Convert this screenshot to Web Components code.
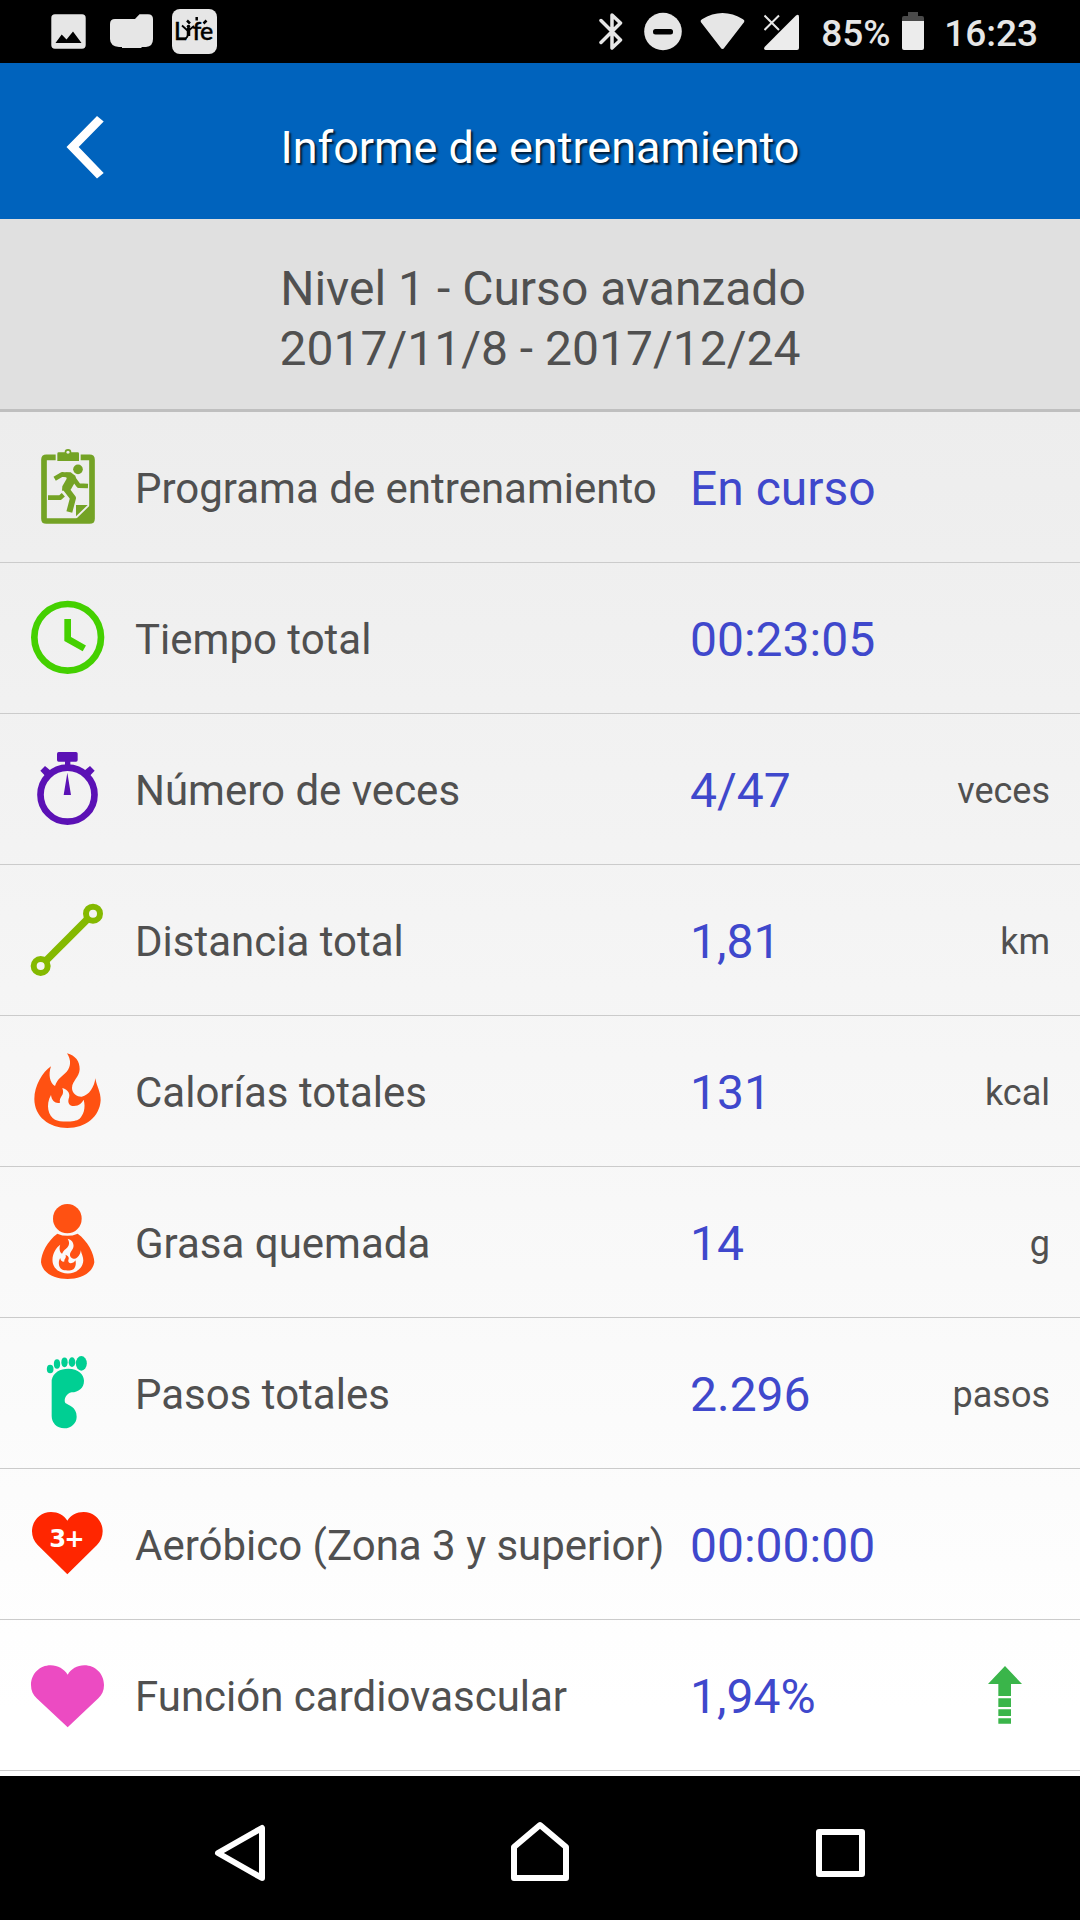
<!DOCTYPE html>
<html lang="es">
<head>
<meta charset="utf-8">
<title>Informe de entrenamiento</title>
<style>
  body {
    margin: 0;
    background: #000;
    font-family: Roboto, "Noto Sans", sans-serif;
  }
</style>
</head>
<body>

<report-screen>
  <status-bar slot="status" battery="85%" time="16:23"></status-bar>
  <title-bar slot="title">Informe de entrenamiento</title-bar>
  <program-summary slot="summary">
    <span>Nivel 1 - Curso avanzado</span>
    <span slot="dates">2017/11/8 - 2017/12/24</span>
  </program-summary>

  <stat-row icon="program" value="En curso">Programa de entrenamiento</stat-row>
  <stat-row icon="clock" value="00:23:05">Tiempo total</stat-row>
  <stat-row icon="stopwatch" value="4/47" unit="veces">Número de veces</stat-row>
  <stat-row icon="distance" value="1,81" unit="km">Distancia total</stat-row>
  <stat-row icon="flame" value="131" unit="kcal">Calorías totales</stat-row>
  <stat-row icon="fat" value="14" unit="g">Grasa quemada</stat-row>
  <stat-row icon="foot" value="2.296" unit="pasos">Pasos totales</stat-row>
  <stat-row icon="zone" value="00:00:00">Aeróbico (Zona 3 y superior)</stat-row>
  <stat-row icon="heart" value="1,94%" trend="up">Función cardiovascular</stat-row>

  <nav-bar slot="nav"></nav-bar>
</report-screen>

<script>
const FLAME = `
  M201 100 C226 106 240 125 239 148 C238 172 217 182 216 204 C216 222 234 231 245 230
  C268 226 283 200 286 175 C290 200 302 215 302 241 C299 290 258 324 202 324
  C148 324 103 290 103 237 C103 197 128 156 153 139 C144 165 150 190 165 198
  C172 175 188 168 200 155 C213 140 214 120 201 100Z
  M187 204 C205 210 212 222 206 236 C202 250 210 259 222 258 C238 257 246 248 251 239
  C258 265 250 285 238 297 C225 307 180 307 165 299 C145 288 136 255 153 225
  C155 243 168 252 180 248 C176 228 196 228 187 204Z`;

// each entry: top of the 240-unit viewBox, then the drawing itself
const ICONS = {
  program: [81, `
    <g fill="none" stroke="#74a325">
      <path stroke-width="17" d="M167 112H139Q132 112 132 119V296Q132 303 139 303H269Q276 303 276 296V119Q276 112 269 112H242"/>
      <circle cx="204" cy="97" r="7.5" stroke-width="5"/>
      <path stroke-width="14" stroke-linejoin="round" d="M164 176L187 163L210 166M219 174L236 197L264 198"/>
      <path stroke-width="18" stroke-linejoin="round" d="M197 205L219 234L208 276"/>
      <path stroke-width="14" stroke-linejoin="round" d="M144 233H180L190 224"/>
    </g>
    <g fill="#74a325">
      <path d="M176 97H195A10 8 0 0 0 213 97H233Q237 97 237 101V123H172V101Q172 97 176 97Z"/>
      <circle cx="234" cy="148" r="14.500"/>
      <path d="M196 157L212 157L226 167L229 180L212 209L186 212L187 199L200 176Z"/>
      <path d="M228 255H263L228 289ZM270 256H276V303H228V297Z"/>
    </g>`],
  clock: [534, `
    <g fill="none" stroke="#44d000" stroke-width="20">
      <circle cx="203" cy="652" r="100"/>
      <path d="M203 597V657L253 685"/>
    </g>`],
  stopwatch: [87, `
    <g fill="#5b11b5">
      <rect x="171" y="96" width="62" height="29" rx="5"/>
      <path d="M195 122H211V140H195ZM121 152L135 138L154 154L138 170ZM284 152L270 138L251 154L267 170ZM202 158L213 225H191Z"/>
    </g>
    <circle cx="202.500" cy="224" r="81" fill="none" stroke="#5b11b5" stroke-width="20"/>`],
  distance: [540, `
    <g fill="none" stroke="#84b900" stroke-width="18">
      <path stroke-width="22" d="M137 723L264 596"/>
      <circle cx="122" cy="738" r="21"/>
      <circle cx="279" cy="581" r="21"/>
    </g>`],
  flame: [93, `<path fill="#ff5112" fill-rule="evenodd" d="${FLAME}"/>`],
  fat: [546, `
    <g fill="#ff5112">
      <ellipse cx="202" cy="596" rx="43" ry="44"/>
      <path d="M172 641Q202 654 233 641C262 662 283 700 283 727C278 760 240 777 203 777C165 777 127 760 123 727C123 700 143 662 172 641Z"/>
    </g>
    <path fill="#f9f9f9" fill-rule="evenodd" transform="translate(109.500 609.500) scale(.465)" d="${FLAME}"/>`],
  foot: [99, `
    <g fill="#00cf93">
      <ellipse cx="150.500" cy="147" rx="10" ry="13"/>
      <ellipse cx="171" cy="132" rx="9.500" ry="14.500"/>
      <ellipse cx="193.500" cy="127" rx="9.500" ry="14.500"/>
      <ellipse cx="216" cy="126.500" rx="10" ry="14.500"/>
      <ellipse cx="244" cy="130" rx="16.500" ry="22"/>
      <path d="M155 180C160 157 180 146 205 146C235 146 252 164 252 182C252 205 235 216 215 217C200 219 190 238 196 249C205 256 230 260 230 290C230 310 213 325 193 325C170 325 155 308 155 288Z"/>
    </g>`],
  zone: [552, `
    <path fill="#ff2600" d="M202 763L113 675C102 664 96 650 96 634C96 602 121 576 153 576C174 576 192 586 202 602C212 586 230 576 251 576C283 576 308 602 308 634C308 650 302 664 291 675Z"/>
    <text x="148" y="682" fill="#fff" font-family="DejaVu Sans" font-weight="700" font-size="73" textLength="106">3+</text>`],
  heart: [1005, `
    <path fill="#ec4bc2" d="M203 1222L110 1135C99 1124 93 1112 93 1095C93 1062 119 1036 152 1036C174 1036 192 1047 203 1064C213 1047 231 1036 253 1036C286 1036 312 1062 312 1095C312 1112 306 1124 295 1135Z"/>`],
};

const TREND_UP = `
  <svg class="trend" width="88" height="88" viewBox="963 513 264 264">
    <path fill="#3ab54a" d="M1095 558L1146 612H1113V648H1075V612H1044ZM1075 655H1113V681H1075ZM1075 688H1113V708H1075ZM1075 715H1113V731H1075Z"/>
  </svg>`;

class ReportScreen extends HTMLElement {
  constructor() {
    super();
    this.attachShadow({ mode: 'open' }).innerHTML = `
      <style>
        :host {
          display: flex;
          flex-direction: column;
          width: 1080px;
          height: 1920px;
          overflow: hidden;
        }

        .list {
          flex: 1;
          min-height: 0;
          background: linear-gradient(#ededed, #fff 95%);
        }
      </style>
      <slot name="status"></slot>
      <slot name="title"></slot>
      <slot name="summary"></slot>
      <div class="list"><slot></slot></div>
      <slot name="nav"></slot>
    `;
  }
}

class StatusBar extends HTMLElement {
  constructor() {
    super();
    this.attachShadow({ mode: 'open' });
  }

  connectedCallback() {
    this.shadowRoot.innerHTML = `
      <style>
        :host {
          display: flex;
          justify-content: space-between;
          box-sizing: border-box;
          height: 63px;
          padding: 0 42px 0 51px;
          background: #000;
          color: #e6e6e6;
          font-size: 37px;
          font-weight: 500;
          line-height: 67px;
        }

        .side { display: flex; }
        svg { display: block; fill: #e6e6e6; }
        .folder { margin-left: 24px; }
        .app { margin-left: 19px; }
        .dnd { margin-left: 21px; }
        .wifi { margin-left: 18px; }
        .signal { margin-left: 19px; }
        .battery-text { width: 81px; margin-left: 22px; }
        .battery { margin-right: 20px; }
      </style>
      <div class="side">
        <svg width="35" height="63" viewBox="0 0 35 63">
          <path fill-rule="evenodd" d="M4 14.300H31Q34.700 14.300 34.700 18V45Q34.700 48.700 31 48.700H4Q.3 48.700 .3 45V18Q.3 14.300 4 14.300ZM4.500 43H30.500L22 31.500L15.500 39.500L10.700 34.500Z"/>
        </svg>
        <svg class="folder" width="43" height="63" viewBox="0 0 43 63">
          <path d="M5 19H25L29.500 14.300H38Q43 14.300 43 19V39Q43 46.500 36 47H31.500V48H12V47H9Q0 46 0 39V24Q0 19 5 19Z"/>
        </svg>
        <svg class="app" width="45" height="63" viewBox="0 0 45 63">
          <rect y="9" width="45" height="45" rx="8"/>
          <g fill="#000" stroke="#000" stroke-width=".4" font-family="Lato, sans-serif">
            <text x="2" y="40" font-size="24">L</text>
            <text x="20.500" y="40" font-size="25">f</text>
            <text x="28" y="40" font-size="25">e</text>
          </g>
          <g fill="none" stroke="#000" stroke-width="1.800">
            <path d="M10 25.500L16 31L22 26M13 39.500Q16 37 16.500 33"/>
            <path stroke-width="2.500" d="M24.700 17V20.500M15 20.500L18 23.500M34.500 20.500L31.500 23.500"/>
            <path stroke-width="3.500" d="M16.500 28V36"/>
          </g>
          <circle cx="16.500" cy="26.500" r="1.800" fill="#000"/>
        </svg>
      </div>
      <div class="side">
        <svg width="24" height="63" viewBox="0 0 24 63">
          <path fill="none" stroke="#e6e6e6" stroke-width="3.500" stroke-linejoin="round" stroke-linecap="round" d="M2 20.500L21.500 40L13 48V15L21.500 23L2 42.500"/>
        </svg>
        <svg class="dnd" width="38" height="63" viewBox="0 0 38 63">
          <circle cx="19" cy="31.500" r="18.800"/>
          <rect x="9" y="29" width="20" height="5.500" rx="2.500" fill="#000"/>
        </svg>
        <svg class="wifi" width="45" height="63" viewBox="0 0 45 63">
          <path d="M.8 22Q0 20.500 2 19.300Q22.500 6.500 43 19.300Q45 20.500 44.200 22L24.500 47.500Q22.500 50.500 20.500 47.500Z"/>
        </svg>
        <svg class="signal" width="35" height="63" viewBox="0 0 35 63">
          <path fill="#ececec" d="M32 15.500Q35 13.500 35 17V48Q35 50 33 50H1.500Q-1 49 .8 46.700Z"/>
          <path fill="none" stroke="#000" stroke-width="7" d="M0 15L15 30M15 15L0 30"/>
          <path fill="none" stroke="#e6e6e6" stroke-width="2" d="M.5 15.500L15 30M15 15.500L.5 30"/>
        </svg>
        <span class="battery-text">${this.getAttribute('battery')}</span>
        <svg class="battery" width="22" height="63" viewBox="0 0 22 63">
          <path fill="#4a4a4a" d="M6 12H16V16H20Q22 16 22 18V21H0V18Q0 16 2 16H6Z"/>
          <path fill="#ececec" d="M0 21H22V48Q22 50 20 50H2Q0 50 0 48Z"/>
        </svg>
        <span>${this.getAttribute('time')}</span>
      </div>
    `;
  }
}

class TitleBar extends HTMLElement {
  constructor() {
    super();
    this.attachShadow({ mode: 'open' }).innerHTML = `
      <style>
        :host {
          display: grid;
          grid-template-columns: 170px 1fr 170px;
          align-items: center;
          height: 156px;
          background: #0063bd;
          color: #fff;
          font-size: 45px;
        }

        .text {
          padding-top: 13px;
          text-align: center;
          text-shadow: 2px 2px 2px rgba(0, 0, 0, 0.75);
          white-space: nowrap;
        }
      </style>
      <svg width="170" height="156" viewBox="0 63 170 156">
        <path fill="#fff" d="M66.500 147L97 116L103.700 121.500L78.700 147L103.700 173L97 178.500Z"/>
      </svg>
      <div class="text"><slot></slot></div>
    `;
  }
}

class ProgramSummary extends HTMLElement {
  constructor() {
    super();
    this.attachShadow({ mode: 'open' }).innerHTML = `
      <style>
        :host {
          display: flex;
          flex-direction: column;
          align-items: center;
          justify-content: center;
          box-sizing: border-box;
          height: 193px;
          padding-top: 10px;
          border-bottom: 3px solid #bfbfbf;
          background: #e0e0e0;
          color: #505050;
          font-size: 48px;
          line-height: 60px;
        }

        .name { padding-left: 6px; }
      </style>
      <div class="name"><slot></slot></div>
      <div><slot name="dates"></slot></div>
    `;
  }
}

class StatRow extends HTMLElement {
  constructor() {
    super();
    this.attachShadow({ mode: 'open' });
  }

  connectedCallback() {
    const [top, drawing] = ICONS[this.getAttribute('icon')];
    const unit = this.getAttribute('unit') || '';
    const trend = this.getAttribute('trend') === 'up' ? TREND_UP : '';

    this.shadowRoot.innerHTML = `
      <style>
        :host {
          display: grid;
          grid-template-columns: 135px 555px 1fr auto;
          align-items: center;
          box-sizing: border-box;
          height: 151px;
          padding-right: 30px;
          border-bottom: 1px solid #cbcbcb;
          color: #505050;
          white-space: nowrap;
        }

        svg { display: block; }
        .icon { justify-self: center; }

        .label,
        .value {
          padding-top: 3px;
        }

        .label { font-size: 42px; }
        .value { color: #3f48cc; font-size: 48px; }
        .unit { padding-top: 4px; font-size: 36px; }
        .trend { margin-right: 1px; }
      </style>
      <svg class="icon" width="80" height="80" viewBox="84 ${top} 240 240">${drawing}</svg>
      <div class="label"><slot></slot></div>
      <div class="value">${this.getAttribute('value')}</div>
      ${trend || `<div class="unit">${unit}</div>`}
    `;
  }
}

class NavBar extends HTMLElement {
  constructor() {
    super();
    this.attachShadow({ mode: 'open' }).innerHTML = `
      <style>
        :host {
          display: grid;
          grid-template-columns: repeat(3, 300px);
          place-content: center;
          place-items: center;
          height: 144px;
          background: #000;
        }

        svg {
          display: block;
          fill: none;
          stroke: #fff;
          stroke-width: 6;
          stroke-linejoin: round;
        }
      </style>
      <svg width="72" height="72" viewBox="204 1812 72 72"><path d="M262 1828V1878L218 1853Z"/></svg>
      <svg width="72" height="72" viewBox="504 1812 72 72"><path d="M514 1878V1847L540 1825L566 1847V1878Z"/></svg>
      <svg width="72" height="72" viewBox="804 1812 72 72"><path d="M819 1832H862V1874H819Z"/></svg>
    `;
  }
}

customElements.define('status-bar', StatusBar);
customElements.define('title-bar', TitleBar);
customElements.define('program-summary', ProgramSummary);
customElements.define('stat-row', StatRow);
customElements.define('nav-bar', NavBar);
customElements.define('report-screen', ReportScreen);
</script>
</body>
</html>
